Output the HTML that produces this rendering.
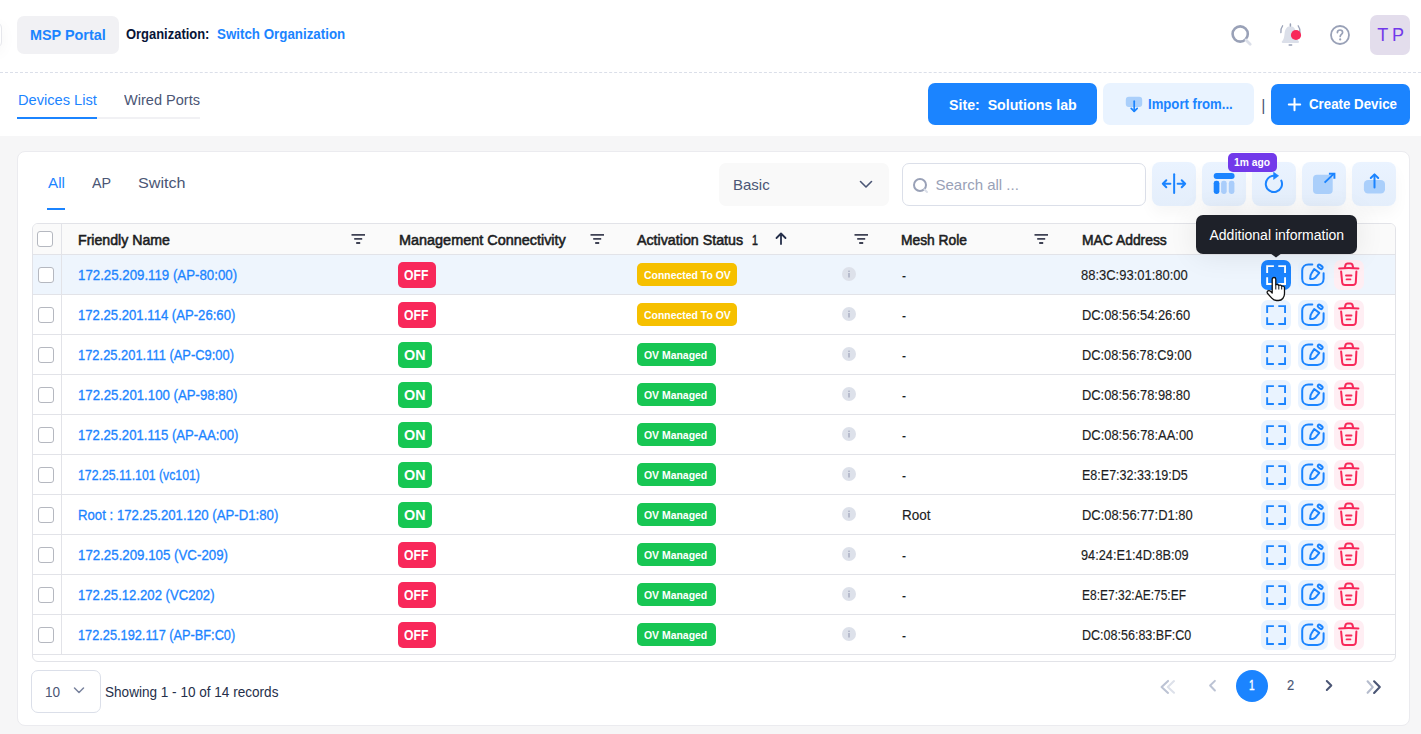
<!DOCTYPE html>
<html><head><meta charset="utf-8">
<style>
*{box-sizing:border-box;margin:0;padding:0}
html,body{width:1421px;height:734px;overflow:hidden;background:#fff;font-family:"Liberation Sans",sans-serif;position:relative}
.a{position:absolute;display:block}
.t{position:absolute;line-height:1;white-space:nowrap}
</style></head><body>
<div class="a" style="left:0px;top:136px;width:1421px;height:598px;background:#f6f6f7"></div>
<div class="a" style="left:-30px;top:22px;width:32px;height:26px;border:1px solid #e6e7ec;border-radius:6px;background:#fff;box-shadow:0 4px 16px rgba(0,0,0,.045)"></div>
<div class="a" style="left:17px;top:16px;width:102px;height:38px;background:#f1f1f4;border-radius:7px"></div>
<div class="t" style="left:30.00px;top:27.73px;font-size:14.5px;color:#1b84ff;font-weight:bold;transform:scaleX(0.9936);transform-origin:0 0;">MSP Portal</div>
<div class="t" style="left:126.00px;top:27.03px;font-size:14.5px;color:#071437;font-weight:bold;transform:scaleX(0.8926);transform-origin:0 0;">Organization:</div>
<div class="t" style="left:217.00px;top:27.03px;font-size:14.5px;color:#1b84ff;font-weight:bold;transform:scaleX(0.9198);transform-origin:0 0;">Switch Organization</div>
<div class="a" style="left:0px;top:72px;width:1421px;height:1px;border-top:1px dashed #dbdfe9"></div>
<svg class="a" style="left:1229px;top:23px" width="24" height="24" viewBox="0 0 24 24"><circle cx="11.2" cy="11" r="7.6" fill="none" stroke="#99a1b7" stroke-width="2.6"/><path d="M17 17 L21.2 21.2" stroke="#dbdfe9" stroke-width="2.8" stroke-linecap="round"/></svg>
<svg class="a" style="left:1278px;top:22px" width="26" height="26" viewBox="0 0 26 26"><path d="M12.4 4.3 C8.6 4.3 6.9 7.6 6.6 11.5 C6.3 15.2 5.6 17.6 4 19.3 C3.4 20 3.8 21 4.8 21 L20 21 C21 21 21.4 20 20.8 19.3 C19.2 17.6 18.5 15.2 18.2 11.5 C17.9 7.6 16.2 4.3 12.4 4.3 Z" fill="#dbdfe9"/><path d="M12.4 2 L12.4 4" stroke="#99a1b7" stroke-width="1.5" stroke-linecap="round"/><path d="M11.2 22.9 L13.6 22.9" stroke="#99a1b7" stroke-width="1.5" stroke-linecap="round"/><path d="M4.6 3.8 C3.2 5.6 2.6 8 2.9 10.6" fill="none" stroke="#99a1b7" stroke-width="1.3" stroke-linecap="round"/><path d="M20.2 3.8 C21.6 5.6 22.2 8 21.9 10.6" fill="none" stroke="#99a1b7" stroke-width="1.3" stroke-linecap="round"/><circle cx="18" cy="13" r="5.1" fill="#f8285a"/></svg>
<svg class="a" style="left:1328px;top:23px" width="24" height="24" viewBox="0 0 24 24"><circle cx="12" cy="12" r="9" fill="none" stroke="#99a1b7" stroke-width="1.8"/><path d="M9.4 9.6 C9.4 8 10.6 7 12 7 C13.5 7 14.6 8 14.6 9.4 C14.6 11.2 12.2 11.4 12.2 13.4" fill="none" stroke="#99a1b7" stroke-width="1.7" stroke-linecap="round"/><circle cx="12.2" cy="16.4" r="1.1" fill="#99a1b7"/></svg>
<div class="a" style="left:1370px;top:15px;width:40px;height:40px;background:#e3ddec;border-radius:7px"></div>
<div class="t" style="left:1377.30px;top:25.56px;font-size:18px;color:#7239ea;">T</div>
<div class="t" style="left:1392.00px;top:25.56px;font-size:18px;color:#7239ea;">P</div>
<div class="t" style="left:17.70px;top:92.85px;font-size:14px;color:#1b84ff;transform:scaleX(1.0454);transform-origin:0 0;">Devices List</div>
<div class="t" style="left:123.70px;top:92.85px;font-size:14px;color:#4b5675;transform:scaleX(1.0394);transform-origin:0 0;">Wired Ports</div>
<div class="a" style="left:17px;top:117px;width:183px;height:2px;background:#f1f1f4"></div>
<div class="a" style="left:17px;top:117px;width:80px;height:2px;background:#1b84ff"></div>
<div class="a" style="left:928px;top:83px;width:169px;height:42px;background:#1b84ff;border-radius:7px"></div>
<div class="t" style="left:948.60px;top:97.40px;font-size:15px;color:#fff;font-weight:bold;transform:scaleX(0.9458);transform-origin:0 0;">Site:&nbsp; Solutions lab</div>
<div class="a" style="left:1103px;top:83px;width:151px;height:42px;background:#e9f3ff;border-radius:7px"></div>
<svg class="a" style="left:1124px;top:95px" width="20" height="18" viewBox="0 0 20 18"><rect x="1.8" y="1.8" width="16.4" height="10.2" rx="3" fill="#aacffb"/><path d="M10.2 6.2 L10.2 16.2" stroke="#1b84ff" stroke-width="1.7" stroke-linecap="round"/><path d="M7.2 13.3 L10.2 16.4 L13.2 13.3" fill="none" stroke="#1b84ff" stroke-width="1.7" stroke-linecap="round" stroke-linejoin="round"/></svg>
<div class="t" style="left:1148.30px;top:96.85px;font-size:14px;color:#1b84ff;font-weight:bold;transform:scaleX(0.9389);transform-origin:0 0;">Import from...</div>
<div class="t" style="left:1261.20px;top:97.96px;font-size:16px;color:#4b5675;">|</div>
<div class="a" style="left:1271px;top:84px;width:139px;height:41px;background:#1b84ff;border-radius:7px"></div>
<svg class="a" style="left:1287px;top:97px" width="15" height="15" viewBox="0 0 15 15"><path d="M7.5 1.8 L7.5 13.2 M1.8 7.5 L13.2 7.5" stroke="#fff" stroke-width="2" stroke-linecap="round"/></svg>
<div class="t" style="left:1309.00px;top:96.85px;font-size:14px;color:#fff;font-weight:bold;transform:scaleX(0.9502);transform-origin:0 0;">Create Device</div>
<div class="a" style="left:17px;top:151px;width:1393px;height:575px;background:#fff;border:1px solid #ebebef;border-radius:8px"></div>
<div class="t" style="left:47.90px;top:175.40px;font-size:15px;color:#1b84ff;transform:scaleX(1.0141);transform-origin:0 0;">All</div>
<div class="t" style="left:91.80px;top:175.40px;font-size:15px;color:#4b5675;transform:scaleX(0.9545);transform-origin:0 0;">AP</div>
<div class="t" style="left:137.70px;top:175.40px;font-size:15px;color:#4b5675;transform:scaleX(1.0775);transform-origin:0 0;">Switch</div>
<div class="a" style="left:47px;top:208px;width:18px;height:2px;background:#1b84ff"></div>
<div class="a" style="left:719px;top:163px;width:170px;height:43px;background:#f9f9f9;border-radius:7px"></div>
<div class="t" style="left:733.00px;top:177.30px;font-size:15px;color:#4b5675;">Basic</div>
<svg class="a" style="left:858px;top:177px" width="16" height="14" viewBox="0 0 16 14"><path d="M2.5 4.5 L8 10 L13.5 4.5" fill="none" stroke="#4b5675" stroke-width="1.6" stroke-linecap="round" stroke-linejoin="round"/></svg>
<div class="a" style="left:902px;top:163px;width:244px;height:43px;border:1px solid #dbdfe9;border-radius:7px;background:#fff"></div>
<svg class="a" style="left:911px;top:176px" width="20" height="20" viewBox="0 0 20 20"><circle cx="9" cy="9" r="6" fill="none" stroke="#99a1b7" stroke-width="2"/><path d="M13.5 13.5 L16 16" stroke="#dbdfe9" stroke-width="2" stroke-linecap="round"/></svg>
<div class="t" style="left:935.50px;top:177.30px;font-size:15px;color:#99a1b7;">Search all ...</div>
<div class="a" style="left:1152px;top:162px;width:44px;height:44px;background:linear-gradient(#eaf3ff,#e4eefb);border-radius:8px;box-shadow:0 8px 16px rgba(0,0,0,.035)"></div>
<div class="a" style="left:1202px;top:162px;width:44px;height:44px;background:linear-gradient(#eaf3ff,#e4eefb);border-radius:8px;box-shadow:0 8px 16px rgba(0,0,0,.035)"></div>
<div class="a" style="left:1252px;top:162px;width:44px;height:44px;background:linear-gradient(#eaf3ff,#e4eefb);border-radius:8px;box-shadow:0 8px 16px rgba(0,0,0,.035)"></div>
<div class="a" style="left:1302px;top:162px;width:44px;height:44px;background:linear-gradient(#eaf3ff,#e4eefb);border-radius:8px;box-shadow:0 8px 16px rgba(0,0,0,.035)"></div>
<div class="a" style="left:1352px;top:162px;width:44px;height:44px;background:linear-gradient(#eaf3ff,#e4eefb);border-radius:8px;box-shadow:0 8px 16px rgba(0,0,0,.035)"></div>
<svg class="a" style="left:1152px;top:162px" width="44" height="44" viewBox="0 0 44 44"><path d="M22.15 12.3 L22.15 31.1" stroke="#1b84ff" stroke-width="2" stroke-linecap="round"/><path d="M10.8 21.8 L18.4 21.8 M14.3 18.3 L10.8 21.8 L14.3 25.3" fill="none" stroke="#1b84ff" stroke-width="2" stroke-linecap="round" stroke-linejoin="round"/><path d="M25.6 21.8 L33.2 21.8 M29.7 18.3 L33.2 21.8 L29.7 25.3" fill="none" stroke="#1b84ff" stroke-width="2" stroke-linecap="round" stroke-linejoin="round"/></svg>
<svg class="a" style="left:1202px;top:162px" width="44" height="44" viewBox="0 0 44 44"><rect x="11.7" y="11" width="20.9" height="5.9" rx="2.9" fill="#1b84ff"/><rect x="11.7" y="18.8" width="5.7" height="13.1" rx="2.4" fill="#1b84ff"/><rect x="19.1" y="18.8" width="5.6" height="13.1" rx="2.4" fill="#a9cdfb"/><rect x="26.8" y="18.8" width="5.6" height="13.1" rx="2.4" fill="#a9cdfb"/></svg>
<svg class="a" style="left:1252px;top:162px" width="44" height="44" viewBox="0 0 44 44"><path d="M21.9 13.8 A8.1 8.1 0 1 0 29.3 18.6" fill="none" stroke="#1b84ff" stroke-width="2" stroke-linecap="round"/><path d="M21.6 10.2 L26.6 13.8 L21.6 17.4 Z" fill="#1b84ff" stroke="#1b84ff" stroke-width="0.6" stroke-linejoin="round"/></svg>
<svg class="a" style="left:1302px;top:162px" width="44" height="44" viewBox="0 0 44 44"><rect x="11" y="12.8" width="19.7" height="19.3" rx="4" fill="#aacffb"/><path d="M22.6 20.6 L32 11.6" stroke="#1b84ff" stroke-width="2" stroke-linecap="butt"/><path d="M26.9 11.8 L32.4 11.8 L32.4 16.8" fill="none" stroke="#1b84ff" stroke-width="2" stroke-linecap="butt" stroke-linejoin="miter"/></svg>
<svg class="a" style="left:1352px;top:162px" width="44" height="44" viewBox="0 0 44 44"><rect x="11.9" y="17.9" width="21.1" height="13.7" rx="4.2" fill="#aacffb"/><path d="M22.5 13 L22.5 25.6" stroke="#1b84ff" stroke-width="2" stroke-linecap="round"/><path d="M18.8 16 L22.5 12.4 L26.2 16" fill="none" stroke="#1b84ff" stroke-width="2" stroke-linecap="round" stroke-linejoin="round"/></svg>
<div class="a" style="left:1228px;top:152.5px;width:49px;height:19px;background:#7239ea;border-radius:5px"></div>
<div class="t" style="left:1234.00px;top:156.77px;font-size:11.5px;color:#fff;font-weight:bold;transform:scaleX(0.8942);transform-origin:0 0;">1m ago</div>
<div class="a" style="left:32px;top:223px;width:1364px;height:439px;border:1px solid #e2e3e8;border-radius:6px;overflow:hidden;background:#fff"></div>
<div class="a" style="left:33px;top:224px;width:1362px;height:30px;background:#fafafa;border-top-left-radius:5px;border-top-right-radius:5px"></div>
<div class="a" style="left:33px;top:254px;width:1362px;height:1px;background:#e2e3e8"></div>
<div class="a" style="left:33px;top:255px;width:1362px;height:40px;background:#eef5fd"></div>
<div class="a" style="left:33px;top:294px;width:1362px;height:1px;background:#e2e3e8"></div>
<div class="a" style="left:38px;top:267px;width:16px;height:16px;border:1px solid #b5b8c0;border-radius:3px;background:#fff"></div>
<div class="t" style="left:78.30px;top:268.15px;font-size:14px;color:#1b84ff;transform:scaleX(0.9478);transform-origin:0 0;-webkit-text-stroke:0.3px #1b84ff;">172.25.209.119 (AP-80:00)</div>
<div class="a" style="left:398px;top:262px;width:38px;height:26px;background:#f8285a;border-radius:5px"></div>
<div class="t" style="left:404.40px;top:268.15px;font-size:14px;color:#fff;font-weight:bold;transform:scaleX(0.8714);transform-origin:0 0;">OFF</div>
<div class="a" style="left:637px;top:263px;width:100px;height:23px;background:#f6c000;border-radius:5px"></div>
<div class="t" style="left:643.50px;top:270.19px;font-size:11px;color:#fff;font-weight:bold;transform:scaleX(0.9490);transform-origin:0 0;">Connected To OV</div>
<svg class="a" style="left:842px;top:267px" width="14" height="14" viewBox="0 0 14 14"><circle cx="7" cy="7" r="7" fill="#dde1ea"/><rect x="6.3" y="6" width="1.4" height="4.5" fill="#a5acbf"/><rect x="6.3" y="3.6" width="1.4" height="1.4" fill="#a5acbf"/></svg>
<div class="t" style="left:901.50px;top:269.15px;font-size:14px;color:#1c1d22;transform:scaleX(0.8580);transform-origin:0 0;-webkit-text-stroke:0.15px #1c1d22;">-</div>
<div class="t" style="left:1081.10px;top:268.15px;font-size:14px;color:#1c1d22;transform:scaleX(0.9262);transform-origin:0 0;-webkit-text-stroke:0.15px #1c1d22;">88:3C:93:01:80:00</div>
<div class="a" style="left:1261px;top:260px;width:30px;height:30px;background:#1b84ff;border-radius:7px"></div>
<svg class="a" style="left:1261px;top:260px" width="30" height="30" viewBox="0 0 30 30"><path d="M6.15 12.9 L6.15 6.15 L12.9 6.15 M17.3 6.15 L24.05 6.15 L24.05 12.9 M24.05 17.3 L24.05 24.05 L17.3 24.05 M12.9 24.05 L6.15 24.05 L6.15 17.3" fill="none" stroke="#fff" stroke-width="1.9"/></svg>
<div class="a" style="left:1298px;top:260px;width:30px;height:30px;background:#e9f3ff;border-radius:7px"></div>
<svg class="a" style="left:1298px;top:260px" width="30" height="30" viewBox="0 0 30 30"><path d="M14.3 4.4 L10.4 4.4 C6.8 4.4 4.2 7 4.2 10.6 L4.2 18.7 C4.2 22.3 6.8 24.9 10.4 24.9 L19.4 24.9 C23 24.9 25.6 22.3 25.6 18.7 L25.6 13.3" fill="none" stroke="#1b84ff" stroke-width="2" stroke-linecap="round"/><path d="M16.2 9 L21.3 12.9 L17.6 17.4 C17 18.1 16.2 18.5 15.3 18.7 L13 19.1 C12.5 19.2 12.1 18.8 12.2 18.3 L12.5 15.8 C12.6 15 12.9 14.2 13.4 13.5 Z" fill="none" stroke="#1b84ff" stroke-width="2" stroke-linejoin="round"/><rect x="-2.7" y="-1.45" width="5.4" height="2.9" rx="1.45" transform="translate(22.2 6.8) rotate(37)" fill="none" stroke="#1b84ff" stroke-width="2"/></svg>
<div class="a" style="left:1334px;top:260px;width:30px;height:30px;background:#ffeef3;border-radius:7px"></div>
<svg class="a" style="left:1334px;top:260px" width="30" height="30" viewBox="0 0 30 30"><path d="M5.2 8.4 C11 7.9 18.6 7.9 24.4 8.4" fill="none" stroke="#f8285a" stroke-width="2" stroke-linecap="round"/><path d="M10.8 8 L11.3 5.7 C11.6 4.4 12.4 3.6 13.6 3.6 L16.4 3.6 C17.6 3.6 18.4 4.4 18.7 5.7 L19.2 8" fill="none" stroke="#f8285a" stroke-width="2"/><path d="M7.1 11.4 L8.2 22.5 C8.4 24.2 9.5 25.1 11.1 25.1 L18.9 25.1 C20.5 25.1 21.6 24.2 21.8 22.5 L22.4 11.4" fill="none" stroke="#f8285a" stroke-width="2" stroke-linecap="round"/><path d="M12 15.5 L17.5 15.5 M12.6 19.4 L16.4 19.4" stroke="#f8285a" stroke-width="1.9" stroke-linecap="round"/></svg>
<div class="a" style="left:33px;top:334px;width:1362px;height:1px;background:#e2e3e8"></div>
<div class="a" style="left:38px;top:307px;width:16px;height:16px;border:1px solid #b5b8c0;border-radius:3px;background:#fff"></div>
<div class="t" style="left:78.30px;top:308.15px;font-size:14px;color:#1b84ff;transform:scaleX(0.9371);transform-origin:0 0;-webkit-text-stroke:0.3px #1b84ff;">172.25.201.114 (AP-26:60)</div>
<div class="a" style="left:398px;top:302px;width:38px;height:26px;background:#f8285a;border-radius:5px"></div>
<div class="t" style="left:404.40px;top:308.15px;font-size:14px;color:#fff;font-weight:bold;transform:scaleX(0.8714);transform-origin:0 0;">OFF</div>
<div class="a" style="left:637px;top:303px;width:100px;height:23px;background:#f6c000;border-radius:5px"></div>
<div class="t" style="left:643.50px;top:310.19px;font-size:11px;color:#fff;font-weight:bold;transform:scaleX(0.9490);transform-origin:0 0;">Connected To OV</div>
<svg class="a" style="left:842px;top:307px" width="14" height="14" viewBox="0 0 14 14"><circle cx="7" cy="7" r="7" fill="#dde1ea"/><rect x="6.3" y="6" width="1.4" height="4.5" fill="#a5acbf"/><rect x="6.3" y="3.6" width="1.4" height="1.4" fill="#a5acbf"/></svg>
<div class="t" style="left:901.50px;top:309.15px;font-size:14px;color:#1c1d22;transform:scaleX(0.8580);transform-origin:0 0;-webkit-text-stroke:0.15px #1c1d22;">-</div>
<div class="t" style="left:1081.60px;top:308.15px;font-size:14px;color:#1c1d22;transform:scaleX(0.9206);transform-origin:0 0;-webkit-text-stroke:0.15px #1c1d22;">DC:08:56:54:26:60</div>
<div class="a" style="left:1261px;top:300px;width:30px;height:30px;background:#e9f3ff;border-radius:7px"></div>
<svg class="a" style="left:1261px;top:300px" width="30" height="30" viewBox="0 0 30 30"><path d="M6.15 12.9 L6.15 6.15 L12.9 6.15 M17.3 6.15 L24.05 6.15 L24.05 12.9 M24.05 17.3 L24.05 24.05 L17.3 24.05 M12.9 24.05 L6.15 24.05 L6.15 17.3" fill="none" stroke="#1b84ff" stroke-width="1.9"/></svg>
<div class="a" style="left:1298px;top:300px;width:30px;height:30px;background:#e9f3ff;border-radius:7px"></div>
<svg class="a" style="left:1298px;top:300px" width="30" height="30" viewBox="0 0 30 30"><path d="M14.3 4.4 L10.4 4.4 C6.8 4.4 4.2 7 4.2 10.6 L4.2 18.7 C4.2 22.3 6.8 24.9 10.4 24.9 L19.4 24.9 C23 24.9 25.6 22.3 25.6 18.7 L25.6 13.3" fill="none" stroke="#1b84ff" stroke-width="2" stroke-linecap="round"/><path d="M16.2 9 L21.3 12.9 L17.6 17.4 C17 18.1 16.2 18.5 15.3 18.7 L13 19.1 C12.5 19.2 12.1 18.8 12.2 18.3 L12.5 15.8 C12.6 15 12.9 14.2 13.4 13.5 Z" fill="none" stroke="#1b84ff" stroke-width="2" stroke-linejoin="round"/><rect x="-2.7" y="-1.45" width="5.4" height="2.9" rx="1.45" transform="translate(22.2 6.8) rotate(37)" fill="none" stroke="#1b84ff" stroke-width="2"/></svg>
<div class="a" style="left:1334px;top:300px;width:30px;height:30px;background:#ffeef3;border-radius:7px"></div>
<svg class="a" style="left:1334px;top:300px" width="30" height="30" viewBox="0 0 30 30"><path d="M5.2 8.4 C11 7.9 18.6 7.9 24.4 8.4" fill="none" stroke="#f8285a" stroke-width="2" stroke-linecap="round"/><path d="M10.8 8 L11.3 5.7 C11.6 4.4 12.4 3.6 13.6 3.6 L16.4 3.6 C17.6 3.6 18.4 4.4 18.7 5.7 L19.2 8" fill="none" stroke="#f8285a" stroke-width="2"/><path d="M7.1 11.4 L8.2 22.5 C8.4 24.2 9.5 25.1 11.1 25.1 L18.9 25.1 C20.5 25.1 21.6 24.2 21.8 22.5 L22.4 11.4" fill="none" stroke="#f8285a" stroke-width="2" stroke-linecap="round"/><path d="M12 15.5 L17.5 15.5 M12.6 19.4 L16.4 19.4" stroke="#f8285a" stroke-width="1.9" stroke-linecap="round"/></svg>
<div class="a" style="left:33px;top:374px;width:1362px;height:1px;background:#e2e3e8"></div>
<div class="a" style="left:38px;top:347px;width:16px;height:16px;border:1px solid #b5b8c0;border-radius:3px;background:#fff"></div>
<div class="t" style="left:78.30px;top:348.15px;font-size:14px;color:#1b84ff;transform:scaleX(0.9223);transform-origin:0 0;-webkit-text-stroke:0.3px #1b84ff;">172.25.201.111 (AP-C9:00)</div>
<div class="a" style="left:398px;top:342px;width:34px;height:26px;background:#17c653;border-radius:5px"></div>
<div class="t" style="left:404.40px;top:348.15px;font-size:14px;color:#fff;font-weight:bold;transform:scaleX(1.0238);transform-origin:0 0;">ON</div>
<div class="a" style="left:637px;top:343px;width:79px;height:23px;background:#17c653;border-radius:5px"></div>
<div class="t" style="left:643.50px;top:350.19px;font-size:11px;color:#fff;font-weight:bold;transform:scaleX(0.9490);transform-origin:0 0;">OV Managed</div>
<svg class="a" style="left:842px;top:347px" width="14" height="14" viewBox="0 0 14 14"><circle cx="7" cy="7" r="7" fill="#dde1ea"/><rect x="6.3" y="6" width="1.4" height="4.5" fill="#a5acbf"/><rect x="6.3" y="3.6" width="1.4" height="1.4" fill="#a5acbf"/></svg>
<div class="t" style="left:901.50px;top:349.15px;font-size:14px;color:#1c1d22;transform:scaleX(0.8580);transform-origin:0 0;-webkit-text-stroke:0.15px #1c1d22;">-</div>
<div class="t" style="left:1081.60px;top:348.15px;font-size:14px;color:#1c1d22;transform:scaleX(0.9136);transform-origin:0 0;-webkit-text-stroke:0.15px #1c1d22;">DC:08:56:78:C9:00</div>
<div class="a" style="left:1261px;top:340px;width:30px;height:30px;background:#e9f3ff;border-radius:7px"></div>
<svg class="a" style="left:1261px;top:340px" width="30" height="30" viewBox="0 0 30 30"><path d="M6.15 12.9 L6.15 6.15 L12.9 6.15 M17.3 6.15 L24.05 6.15 L24.05 12.9 M24.05 17.3 L24.05 24.05 L17.3 24.05 M12.9 24.05 L6.15 24.05 L6.15 17.3" fill="none" stroke="#1b84ff" stroke-width="1.9"/></svg>
<div class="a" style="left:1298px;top:340px;width:30px;height:30px;background:#e9f3ff;border-radius:7px"></div>
<svg class="a" style="left:1298px;top:340px" width="30" height="30" viewBox="0 0 30 30"><path d="M14.3 4.4 L10.4 4.4 C6.8 4.4 4.2 7 4.2 10.6 L4.2 18.7 C4.2 22.3 6.8 24.9 10.4 24.9 L19.4 24.9 C23 24.9 25.6 22.3 25.6 18.7 L25.6 13.3" fill="none" stroke="#1b84ff" stroke-width="2" stroke-linecap="round"/><path d="M16.2 9 L21.3 12.9 L17.6 17.4 C17 18.1 16.2 18.5 15.3 18.7 L13 19.1 C12.5 19.2 12.1 18.8 12.2 18.3 L12.5 15.8 C12.6 15 12.9 14.2 13.4 13.5 Z" fill="none" stroke="#1b84ff" stroke-width="2" stroke-linejoin="round"/><rect x="-2.7" y="-1.45" width="5.4" height="2.9" rx="1.45" transform="translate(22.2 6.8) rotate(37)" fill="none" stroke="#1b84ff" stroke-width="2"/></svg>
<div class="a" style="left:1334px;top:340px;width:30px;height:30px;background:#ffeef3;border-radius:7px"></div>
<svg class="a" style="left:1334px;top:340px" width="30" height="30" viewBox="0 0 30 30"><path d="M5.2 8.4 C11 7.9 18.6 7.9 24.4 8.4" fill="none" stroke="#f8285a" stroke-width="2" stroke-linecap="round"/><path d="M10.8 8 L11.3 5.7 C11.6 4.4 12.4 3.6 13.6 3.6 L16.4 3.6 C17.6 3.6 18.4 4.4 18.7 5.7 L19.2 8" fill="none" stroke="#f8285a" stroke-width="2"/><path d="M7.1 11.4 L8.2 22.5 C8.4 24.2 9.5 25.1 11.1 25.1 L18.9 25.1 C20.5 25.1 21.6 24.2 21.8 22.5 L22.4 11.4" fill="none" stroke="#f8285a" stroke-width="2" stroke-linecap="round"/><path d="M12 15.5 L17.5 15.5 M12.6 19.4 L16.4 19.4" stroke="#f8285a" stroke-width="1.9" stroke-linecap="round"/></svg>
<div class="a" style="left:33px;top:414px;width:1362px;height:1px;background:#e2e3e8"></div>
<div class="a" style="left:38px;top:387px;width:16px;height:16px;border:1px solid #b5b8c0;border-radius:3px;background:#fff"></div>
<div class="t" style="left:78.30px;top:388.15px;font-size:14px;color:#1b84ff;transform:scaleX(0.9437);transform-origin:0 0;-webkit-text-stroke:0.3px #1b84ff;">172.25.201.100 (AP-98:80)</div>
<div class="a" style="left:398px;top:382px;width:34px;height:26px;background:#17c653;border-radius:5px"></div>
<div class="t" style="left:404.40px;top:388.15px;font-size:14px;color:#fff;font-weight:bold;transform:scaleX(1.0238);transform-origin:0 0;">ON</div>
<div class="a" style="left:637px;top:383px;width:79px;height:23px;background:#17c653;border-radius:5px"></div>
<div class="t" style="left:643.50px;top:390.19px;font-size:11px;color:#fff;font-weight:bold;transform:scaleX(0.9490);transform-origin:0 0;">OV Managed</div>
<svg class="a" style="left:842px;top:387px" width="14" height="14" viewBox="0 0 14 14"><circle cx="7" cy="7" r="7" fill="#dde1ea"/><rect x="6.3" y="6" width="1.4" height="4.5" fill="#a5acbf"/><rect x="6.3" y="3.6" width="1.4" height="1.4" fill="#a5acbf"/></svg>
<div class="t" style="left:901.50px;top:389.15px;font-size:14px;color:#1c1d22;transform:scaleX(0.8580);transform-origin:0 0;-webkit-text-stroke:0.15px #1c1d22;">-</div>
<div class="t" style="left:1081.60px;top:388.15px;font-size:14px;color:#1c1d22;transform:scaleX(0.9206);transform-origin:0 0;-webkit-text-stroke:0.15px #1c1d22;">DC:08:56:78:98:80</div>
<div class="a" style="left:1261px;top:380px;width:30px;height:30px;background:#e9f3ff;border-radius:7px"></div>
<svg class="a" style="left:1261px;top:380px" width="30" height="30" viewBox="0 0 30 30"><path d="M6.15 12.9 L6.15 6.15 L12.9 6.15 M17.3 6.15 L24.05 6.15 L24.05 12.9 M24.05 17.3 L24.05 24.05 L17.3 24.05 M12.9 24.05 L6.15 24.05 L6.15 17.3" fill="none" stroke="#1b84ff" stroke-width="1.9"/></svg>
<div class="a" style="left:1298px;top:380px;width:30px;height:30px;background:#e9f3ff;border-radius:7px"></div>
<svg class="a" style="left:1298px;top:380px" width="30" height="30" viewBox="0 0 30 30"><path d="M14.3 4.4 L10.4 4.4 C6.8 4.4 4.2 7 4.2 10.6 L4.2 18.7 C4.2 22.3 6.8 24.9 10.4 24.9 L19.4 24.9 C23 24.9 25.6 22.3 25.6 18.7 L25.6 13.3" fill="none" stroke="#1b84ff" stroke-width="2" stroke-linecap="round"/><path d="M16.2 9 L21.3 12.9 L17.6 17.4 C17 18.1 16.2 18.5 15.3 18.7 L13 19.1 C12.5 19.2 12.1 18.8 12.2 18.3 L12.5 15.8 C12.6 15 12.9 14.2 13.4 13.5 Z" fill="none" stroke="#1b84ff" stroke-width="2" stroke-linejoin="round"/><rect x="-2.7" y="-1.45" width="5.4" height="2.9" rx="1.45" transform="translate(22.2 6.8) rotate(37)" fill="none" stroke="#1b84ff" stroke-width="2"/></svg>
<div class="a" style="left:1334px;top:380px;width:30px;height:30px;background:#ffeef3;border-radius:7px"></div>
<svg class="a" style="left:1334px;top:380px" width="30" height="30" viewBox="0 0 30 30"><path d="M5.2 8.4 C11 7.9 18.6 7.9 24.4 8.4" fill="none" stroke="#f8285a" stroke-width="2" stroke-linecap="round"/><path d="M10.8 8 L11.3 5.7 C11.6 4.4 12.4 3.6 13.6 3.6 L16.4 3.6 C17.6 3.6 18.4 4.4 18.7 5.7 L19.2 8" fill="none" stroke="#f8285a" stroke-width="2"/><path d="M7.1 11.4 L8.2 22.5 C8.4 24.2 9.5 25.1 11.1 25.1 L18.9 25.1 C20.5 25.1 21.6 24.2 21.8 22.5 L22.4 11.4" fill="none" stroke="#f8285a" stroke-width="2" stroke-linecap="round"/><path d="M12 15.5 L17.5 15.5 M12.6 19.4 L16.4 19.4" stroke="#f8285a" stroke-width="1.9" stroke-linecap="round"/></svg>
<div class="a" style="left:33px;top:454px;width:1362px;height:1px;background:#e2e3e8"></div>
<div class="a" style="left:38px;top:427px;width:16px;height:16px;border:1px solid #b5b8c0;border-radius:3px;background:#fff"></div>
<div class="t" style="left:78.30px;top:428.15px;font-size:14px;color:#1b84ff;transform:scaleX(0.9382);transform-origin:0 0;-webkit-text-stroke:0.3px #1b84ff;">172.25.201.115 (AP-AA:00)</div>
<div class="a" style="left:398px;top:422px;width:34px;height:26px;background:#17c653;border-radius:5px"></div>
<div class="t" style="left:404.40px;top:428.15px;font-size:14px;color:#fff;font-weight:bold;transform:scaleX(1.0238);transform-origin:0 0;">ON</div>
<div class="a" style="left:637px;top:423px;width:79px;height:23px;background:#17c653;border-radius:5px"></div>
<div class="t" style="left:643.50px;top:430.19px;font-size:11px;color:#fff;font-weight:bold;transform:scaleX(0.9490);transform-origin:0 0;">OV Managed</div>
<svg class="a" style="left:842px;top:427px" width="14" height="14" viewBox="0 0 14 14"><circle cx="7" cy="7" r="7" fill="#dde1ea"/><rect x="6.3" y="6" width="1.4" height="4.5" fill="#a5acbf"/><rect x="6.3" y="3.6" width="1.4" height="1.4" fill="#a5acbf"/></svg>
<div class="t" style="left:901.50px;top:429.15px;font-size:14px;color:#1c1d22;transform:scaleX(0.8580);transform-origin:0 0;-webkit-text-stroke:0.15px #1c1d22;">-</div>
<div class="t" style="left:1081.60px;top:428.15px;font-size:14px;color:#1c1d22;transform:scaleX(0.9226);transform-origin:0 0;-webkit-text-stroke:0.15px #1c1d22;">DC:08:56:78:AA:00</div>
<div class="a" style="left:1261px;top:420px;width:30px;height:30px;background:#e9f3ff;border-radius:7px"></div>
<svg class="a" style="left:1261px;top:420px" width="30" height="30" viewBox="0 0 30 30"><path d="M6.15 12.9 L6.15 6.15 L12.9 6.15 M17.3 6.15 L24.05 6.15 L24.05 12.9 M24.05 17.3 L24.05 24.05 L17.3 24.05 M12.9 24.05 L6.15 24.05 L6.15 17.3" fill="none" stroke="#1b84ff" stroke-width="1.9"/></svg>
<div class="a" style="left:1298px;top:420px;width:30px;height:30px;background:#e9f3ff;border-radius:7px"></div>
<svg class="a" style="left:1298px;top:420px" width="30" height="30" viewBox="0 0 30 30"><path d="M14.3 4.4 L10.4 4.4 C6.8 4.4 4.2 7 4.2 10.6 L4.2 18.7 C4.2 22.3 6.8 24.9 10.4 24.9 L19.4 24.9 C23 24.9 25.6 22.3 25.6 18.7 L25.6 13.3" fill="none" stroke="#1b84ff" stroke-width="2" stroke-linecap="round"/><path d="M16.2 9 L21.3 12.9 L17.6 17.4 C17 18.1 16.2 18.5 15.3 18.7 L13 19.1 C12.5 19.2 12.1 18.8 12.2 18.3 L12.5 15.8 C12.6 15 12.9 14.2 13.4 13.5 Z" fill="none" stroke="#1b84ff" stroke-width="2" stroke-linejoin="round"/><rect x="-2.7" y="-1.45" width="5.4" height="2.9" rx="1.45" transform="translate(22.2 6.8) rotate(37)" fill="none" stroke="#1b84ff" stroke-width="2"/></svg>
<div class="a" style="left:1334px;top:420px;width:30px;height:30px;background:#ffeef3;border-radius:7px"></div>
<svg class="a" style="left:1334px;top:420px" width="30" height="30" viewBox="0 0 30 30"><path d="M5.2 8.4 C11 7.9 18.6 7.9 24.4 8.4" fill="none" stroke="#f8285a" stroke-width="2" stroke-linecap="round"/><path d="M10.8 8 L11.3 5.7 C11.6 4.4 12.4 3.6 13.6 3.6 L16.4 3.6 C17.6 3.6 18.4 4.4 18.7 5.7 L19.2 8" fill="none" stroke="#f8285a" stroke-width="2"/><path d="M7.1 11.4 L8.2 22.5 C8.4 24.2 9.5 25.1 11.1 25.1 L18.9 25.1 C20.5 25.1 21.6 24.2 21.8 22.5 L22.4 11.4" fill="none" stroke="#f8285a" stroke-width="2" stroke-linecap="round"/><path d="M12 15.5 L17.5 15.5 M12.6 19.4 L16.4 19.4" stroke="#f8285a" stroke-width="1.9" stroke-linecap="round"/></svg>
<div class="a" style="left:33px;top:494px;width:1362px;height:1px;background:#e2e3e8"></div>
<div class="a" style="left:38px;top:467px;width:16px;height:16px;border:1px solid #b5b8c0;border-radius:3px;background:#fff"></div>
<div class="t" style="left:78.30px;top:468.15px;font-size:14px;color:#1b84ff;transform:scaleX(0.8766);transform-origin:0 0;-webkit-text-stroke:0.3px #1b84ff;">172.25.11.101 (vc101)</div>
<div class="a" style="left:398px;top:462px;width:34px;height:26px;background:#17c653;border-radius:5px"></div>
<div class="t" style="left:404.40px;top:468.15px;font-size:14px;color:#fff;font-weight:bold;transform:scaleX(1.0238);transform-origin:0 0;">ON</div>
<div class="a" style="left:637px;top:463px;width:79px;height:23px;background:#17c653;border-radius:5px"></div>
<div class="t" style="left:643.50px;top:470.19px;font-size:11px;color:#fff;font-weight:bold;transform:scaleX(0.9490);transform-origin:0 0;">OV Managed</div>
<svg class="a" style="left:842px;top:467px" width="14" height="14" viewBox="0 0 14 14"><circle cx="7" cy="7" r="7" fill="#dde1ea"/><rect x="6.3" y="6" width="1.4" height="4.5" fill="#a5acbf"/><rect x="6.3" y="3.6" width="1.4" height="1.4" fill="#a5acbf"/></svg>
<div class="t" style="left:901.50px;top:469.15px;font-size:14px;color:#1c1d22;transform:scaleX(0.8580);transform-origin:0 0;-webkit-text-stroke:0.15px #1c1d22;">-</div>
<div class="t" style="left:1081.60px;top:468.15px;font-size:14px;color:#1c1d22;transform:scaleX(0.8942);transform-origin:0 0;-webkit-text-stroke:0.15px #1c1d22;">E8:E7:32:33:19:D5</div>
<div class="a" style="left:1261px;top:460px;width:30px;height:30px;background:#e9f3ff;border-radius:7px"></div>
<svg class="a" style="left:1261px;top:460px" width="30" height="30" viewBox="0 0 30 30"><path d="M6.15 12.9 L6.15 6.15 L12.9 6.15 M17.3 6.15 L24.05 6.15 L24.05 12.9 M24.05 17.3 L24.05 24.05 L17.3 24.05 M12.9 24.05 L6.15 24.05 L6.15 17.3" fill="none" stroke="#1b84ff" stroke-width="1.9"/></svg>
<div class="a" style="left:1298px;top:460px;width:30px;height:30px;background:#e9f3ff;border-radius:7px"></div>
<svg class="a" style="left:1298px;top:460px" width="30" height="30" viewBox="0 0 30 30"><path d="M14.3 4.4 L10.4 4.4 C6.8 4.4 4.2 7 4.2 10.6 L4.2 18.7 C4.2 22.3 6.8 24.9 10.4 24.9 L19.4 24.9 C23 24.9 25.6 22.3 25.6 18.7 L25.6 13.3" fill="none" stroke="#1b84ff" stroke-width="2" stroke-linecap="round"/><path d="M16.2 9 L21.3 12.9 L17.6 17.4 C17 18.1 16.2 18.5 15.3 18.7 L13 19.1 C12.5 19.2 12.1 18.8 12.2 18.3 L12.5 15.8 C12.6 15 12.9 14.2 13.4 13.5 Z" fill="none" stroke="#1b84ff" stroke-width="2" stroke-linejoin="round"/><rect x="-2.7" y="-1.45" width="5.4" height="2.9" rx="1.45" transform="translate(22.2 6.8) rotate(37)" fill="none" stroke="#1b84ff" stroke-width="2"/></svg>
<div class="a" style="left:1334px;top:460px;width:30px;height:30px;background:#ffeef3;border-radius:7px"></div>
<svg class="a" style="left:1334px;top:460px" width="30" height="30" viewBox="0 0 30 30"><path d="M5.2 8.4 C11 7.9 18.6 7.9 24.4 8.4" fill="none" stroke="#f8285a" stroke-width="2" stroke-linecap="round"/><path d="M10.8 8 L11.3 5.7 C11.6 4.4 12.4 3.6 13.6 3.6 L16.4 3.6 C17.6 3.6 18.4 4.4 18.7 5.7 L19.2 8" fill="none" stroke="#f8285a" stroke-width="2"/><path d="M7.1 11.4 L8.2 22.5 C8.4 24.2 9.5 25.1 11.1 25.1 L18.9 25.1 C20.5 25.1 21.6 24.2 21.8 22.5 L22.4 11.4" fill="none" stroke="#f8285a" stroke-width="2" stroke-linecap="round"/><path d="M12 15.5 L17.5 15.5 M12.6 19.4 L16.4 19.4" stroke="#f8285a" stroke-width="1.9" stroke-linecap="round"/></svg>
<div class="a" style="left:33px;top:534px;width:1362px;height:1px;background:#e2e3e8"></div>
<div class="a" style="left:38px;top:507px;width:16px;height:16px;border:1px solid #b5b8c0;border-radius:3px;background:#fff"></div>
<div class="t" style="left:78.30px;top:508.15px;font-size:14px;color:#1b84ff;transform:scaleX(0.9427);transform-origin:0 0;-webkit-text-stroke:0.3px #1b84ff;">Root : 172.25.201.120 (AP-D1:80)</div>
<div class="a" style="left:398px;top:502px;width:34px;height:26px;background:#17c653;border-radius:5px"></div>
<div class="t" style="left:404.40px;top:508.15px;font-size:14px;color:#fff;font-weight:bold;transform:scaleX(1.0238);transform-origin:0 0;">ON</div>
<div class="a" style="left:637px;top:503px;width:79px;height:23px;background:#17c653;border-radius:5px"></div>
<div class="t" style="left:643.50px;top:510.19px;font-size:11px;color:#fff;font-weight:bold;transform:scaleX(0.9490);transform-origin:0 0;">OV Managed</div>
<svg class="a" style="left:842px;top:507px" width="14" height="14" viewBox="0 0 14 14"><circle cx="7" cy="7" r="7" fill="#dde1ea"/><rect x="6.3" y="6" width="1.4" height="4.5" fill="#a5acbf"/><rect x="6.3" y="3.6" width="1.4" height="1.4" fill="#a5acbf"/></svg>
<div class="t" style="left:901.50px;top:508.15px;font-size:14px;color:#1c1d22;transform:scaleX(0.9639);transform-origin:0 0;-webkit-text-stroke:0.15px #1c1d22;">Root</div>
<div class="t" style="left:1081.60px;top:508.15px;font-size:14px;color:#1c1d22;transform:scaleX(0.9228);transform-origin:0 0;-webkit-text-stroke:0.15px #1c1d22;">DC:08:56:77:D1:80</div>
<div class="a" style="left:1261px;top:500px;width:30px;height:30px;background:#e9f3ff;border-radius:7px"></div>
<svg class="a" style="left:1261px;top:500px" width="30" height="30" viewBox="0 0 30 30"><path d="M6.15 12.9 L6.15 6.15 L12.9 6.15 M17.3 6.15 L24.05 6.15 L24.05 12.9 M24.05 17.3 L24.05 24.05 L17.3 24.05 M12.9 24.05 L6.15 24.05 L6.15 17.3" fill="none" stroke="#1b84ff" stroke-width="1.9"/></svg>
<div class="a" style="left:1298px;top:500px;width:30px;height:30px;background:#e9f3ff;border-radius:7px"></div>
<svg class="a" style="left:1298px;top:500px" width="30" height="30" viewBox="0 0 30 30"><path d="M14.3 4.4 L10.4 4.4 C6.8 4.4 4.2 7 4.2 10.6 L4.2 18.7 C4.2 22.3 6.8 24.9 10.4 24.9 L19.4 24.9 C23 24.9 25.6 22.3 25.6 18.7 L25.6 13.3" fill="none" stroke="#1b84ff" stroke-width="2" stroke-linecap="round"/><path d="M16.2 9 L21.3 12.9 L17.6 17.4 C17 18.1 16.2 18.5 15.3 18.7 L13 19.1 C12.5 19.2 12.1 18.8 12.2 18.3 L12.5 15.8 C12.6 15 12.9 14.2 13.4 13.5 Z" fill="none" stroke="#1b84ff" stroke-width="2" stroke-linejoin="round"/><rect x="-2.7" y="-1.45" width="5.4" height="2.9" rx="1.45" transform="translate(22.2 6.8) rotate(37)" fill="none" stroke="#1b84ff" stroke-width="2"/></svg>
<div class="a" style="left:1334px;top:500px;width:30px;height:30px;background:#ffeef3;border-radius:7px"></div>
<svg class="a" style="left:1334px;top:500px" width="30" height="30" viewBox="0 0 30 30"><path d="M5.2 8.4 C11 7.9 18.6 7.9 24.4 8.4" fill="none" stroke="#f8285a" stroke-width="2" stroke-linecap="round"/><path d="M10.8 8 L11.3 5.7 C11.6 4.4 12.4 3.6 13.6 3.6 L16.4 3.6 C17.6 3.6 18.4 4.4 18.7 5.7 L19.2 8" fill="none" stroke="#f8285a" stroke-width="2"/><path d="M7.1 11.4 L8.2 22.5 C8.4 24.2 9.5 25.1 11.1 25.1 L18.9 25.1 C20.5 25.1 21.6 24.2 21.8 22.5 L22.4 11.4" fill="none" stroke="#f8285a" stroke-width="2" stroke-linecap="round"/><path d="M12 15.5 L17.5 15.5 M12.6 19.4 L16.4 19.4" stroke="#f8285a" stroke-width="1.9" stroke-linecap="round"/></svg>
<div class="a" style="left:33px;top:574px;width:1362px;height:1px;background:#e2e3e8"></div>
<div class="a" style="left:38px;top:547px;width:16px;height:16px;border:1px solid #b5b8c0;border-radius:3px;background:#fff"></div>
<div class="t" style="left:78.30px;top:548.15px;font-size:14px;color:#1b84ff;transform:scaleX(0.9493);transform-origin:0 0;-webkit-text-stroke:0.3px #1b84ff;">172.25.209.105 (VC-209)</div>
<div class="a" style="left:398px;top:542px;width:38px;height:26px;background:#f8285a;border-radius:5px"></div>
<div class="t" style="left:404.40px;top:548.15px;font-size:14px;color:#fff;font-weight:bold;transform:scaleX(0.8714);transform-origin:0 0;">OFF</div>
<div class="a" style="left:637px;top:543px;width:79px;height:23px;background:#17c653;border-radius:5px"></div>
<div class="t" style="left:643.50px;top:550.19px;font-size:11px;color:#fff;font-weight:bold;transform:scaleX(0.9490);transform-origin:0 0;">OV Managed</div>
<svg class="a" style="left:842px;top:547px" width="14" height="14" viewBox="0 0 14 14"><circle cx="7" cy="7" r="7" fill="#dde1ea"/><rect x="6.3" y="6" width="1.4" height="4.5" fill="#a5acbf"/><rect x="6.3" y="3.6" width="1.4" height="1.4" fill="#a5acbf"/></svg>
<div class="t" style="left:901.50px;top:549.15px;font-size:14px;color:#1c1d22;transform:scaleX(0.8580);transform-origin:0 0;-webkit-text-stroke:0.15px #1c1d22;">-</div>
<div class="t" style="left:1081.10px;top:548.15px;font-size:14px;color:#1c1d22;transform:scaleX(0.9103);transform-origin:0 0;-webkit-text-stroke:0.15px #1c1d22;">94:24:E1:4D:8B:09</div>
<div class="a" style="left:1261px;top:540px;width:30px;height:30px;background:#e9f3ff;border-radius:7px"></div>
<svg class="a" style="left:1261px;top:540px" width="30" height="30" viewBox="0 0 30 30"><path d="M6.15 12.9 L6.15 6.15 L12.9 6.15 M17.3 6.15 L24.05 6.15 L24.05 12.9 M24.05 17.3 L24.05 24.05 L17.3 24.05 M12.9 24.05 L6.15 24.05 L6.15 17.3" fill="none" stroke="#1b84ff" stroke-width="1.9"/></svg>
<div class="a" style="left:1298px;top:540px;width:30px;height:30px;background:#e9f3ff;border-radius:7px"></div>
<svg class="a" style="left:1298px;top:540px" width="30" height="30" viewBox="0 0 30 30"><path d="M14.3 4.4 L10.4 4.4 C6.8 4.4 4.2 7 4.2 10.6 L4.2 18.7 C4.2 22.3 6.8 24.9 10.4 24.9 L19.4 24.9 C23 24.9 25.6 22.3 25.6 18.7 L25.6 13.3" fill="none" stroke="#1b84ff" stroke-width="2" stroke-linecap="round"/><path d="M16.2 9 L21.3 12.9 L17.6 17.4 C17 18.1 16.2 18.5 15.3 18.7 L13 19.1 C12.5 19.2 12.1 18.8 12.2 18.3 L12.5 15.8 C12.6 15 12.9 14.2 13.4 13.5 Z" fill="none" stroke="#1b84ff" stroke-width="2" stroke-linejoin="round"/><rect x="-2.7" y="-1.45" width="5.4" height="2.9" rx="1.45" transform="translate(22.2 6.8) rotate(37)" fill="none" stroke="#1b84ff" stroke-width="2"/></svg>
<div class="a" style="left:1334px;top:540px;width:30px;height:30px;background:#ffeef3;border-radius:7px"></div>
<svg class="a" style="left:1334px;top:540px" width="30" height="30" viewBox="0 0 30 30"><path d="M5.2 8.4 C11 7.9 18.6 7.9 24.4 8.4" fill="none" stroke="#f8285a" stroke-width="2" stroke-linecap="round"/><path d="M10.8 8 L11.3 5.7 C11.6 4.4 12.4 3.6 13.6 3.6 L16.4 3.6 C17.6 3.6 18.4 4.4 18.7 5.7 L19.2 8" fill="none" stroke="#f8285a" stroke-width="2"/><path d="M7.1 11.4 L8.2 22.5 C8.4 24.2 9.5 25.1 11.1 25.1 L18.9 25.1 C20.5 25.1 21.6 24.2 21.8 22.5 L22.4 11.4" fill="none" stroke="#f8285a" stroke-width="2" stroke-linecap="round"/><path d="M12 15.5 L17.5 15.5 M12.6 19.4 L16.4 19.4" stroke="#f8285a" stroke-width="1.9" stroke-linecap="round"/></svg>
<div class="a" style="left:33px;top:614px;width:1362px;height:1px;background:#e2e3e8"></div>
<div class="a" style="left:38px;top:587px;width:16px;height:16px;border:1px solid #b5b8c0;border-radius:3px;background:#fff"></div>
<div class="t" style="left:78.30px;top:588.15px;font-size:14px;color:#1b84ff;transform:scaleX(0.9378);transform-origin:0 0;-webkit-text-stroke:0.3px #1b84ff;">172.25.12.202 (VC202)</div>
<div class="a" style="left:398px;top:582px;width:38px;height:26px;background:#f8285a;border-radius:5px"></div>
<div class="t" style="left:404.40px;top:588.15px;font-size:14px;color:#fff;font-weight:bold;transform:scaleX(0.8714);transform-origin:0 0;">OFF</div>
<div class="a" style="left:637px;top:583px;width:79px;height:23px;background:#17c653;border-radius:5px"></div>
<div class="t" style="left:643.50px;top:590.19px;font-size:11px;color:#fff;font-weight:bold;transform:scaleX(0.9490);transform-origin:0 0;">OV Managed</div>
<svg class="a" style="left:842px;top:587px" width="14" height="14" viewBox="0 0 14 14"><circle cx="7" cy="7" r="7" fill="#dde1ea"/><rect x="6.3" y="6" width="1.4" height="4.5" fill="#a5acbf"/><rect x="6.3" y="3.6" width="1.4" height="1.4" fill="#a5acbf"/></svg>
<div class="t" style="left:901.50px;top:589.15px;font-size:14px;color:#1c1d22;transform:scaleX(0.8580);transform-origin:0 0;-webkit-text-stroke:0.15px #1c1d22;">-</div>
<div class="t" style="left:1081.60px;top:588.15px;font-size:14px;color:#1c1d22;transform:scaleX(0.8566);transform-origin:0 0;-webkit-text-stroke:0.15px #1c1d22;">E8:E7:32:AE:75:EF</div>
<div class="a" style="left:1261px;top:580px;width:30px;height:30px;background:#e9f3ff;border-radius:7px"></div>
<svg class="a" style="left:1261px;top:580px" width="30" height="30" viewBox="0 0 30 30"><path d="M6.15 12.9 L6.15 6.15 L12.9 6.15 M17.3 6.15 L24.05 6.15 L24.05 12.9 M24.05 17.3 L24.05 24.05 L17.3 24.05 M12.9 24.05 L6.15 24.05 L6.15 17.3" fill="none" stroke="#1b84ff" stroke-width="1.9"/></svg>
<div class="a" style="left:1298px;top:580px;width:30px;height:30px;background:#e9f3ff;border-radius:7px"></div>
<svg class="a" style="left:1298px;top:580px" width="30" height="30" viewBox="0 0 30 30"><path d="M14.3 4.4 L10.4 4.4 C6.8 4.4 4.2 7 4.2 10.6 L4.2 18.7 C4.2 22.3 6.8 24.9 10.4 24.9 L19.4 24.9 C23 24.9 25.6 22.3 25.6 18.7 L25.6 13.3" fill="none" stroke="#1b84ff" stroke-width="2" stroke-linecap="round"/><path d="M16.2 9 L21.3 12.9 L17.6 17.4 C17 18.1 16.2 18.5 15.3 18.7 L13 19.1 C12.5 19.2 12.1 18.8 12.2 18.3 L12.5 15.8 C12.6 15 12.9 14.2 13.4 13.5 Z" fill="none" stroke="#1b84ff" stroke-width="2" stroke-linejoin="round"/><rect x="-2.7" y="-1.45" width="5.4" height="2.9" rx="1.45" transform="translate(22.2 6.8) rotate(37)" fill="none" stroke="#1b84ff" stroke-width="2"/></svg>
<div class="a" style="left:1334px;top:580px;width:30px;height:30px;background:#ffeef3;border-radius:7px"></div>
<svg class="a" style="left:1334px;top:580px" width="30" height="30" viewBox="0 0 30 30"><path d="M5.2 8.4 C11 7.9 18.6 7.9 24.4 8.4" fill="none" stroke="#f8285a" stroke-width="2" stroke-linecap="round"/><path d="M10.8 8 L11.3 5.7 C11.6 4.4 12.4 3.6 13.6 3.6 L16.4 3.6 C17.6 3.6 18.4 4.4 18.7 5.7 L19.2 8" fill="none" stroke="#f8285a" stroke-width="2"/><path d="M7.1 11.4 L8.2 22.5 C8.4 24.2 9.5 25.1 11.1 25.1 L18.9 25.1 C20.5 25.1 21.6 24.2 21.8 22.5 L22.4 11.4" fill="none" stroke="#f8285a" stroke-width="2" stroke-linecap="round"/><path d="M12 15.5 L17.5 15.5 M12.6 19.4 L16.4 19.4" stroke="#f8285a" stroke-width="1.9" stroke-linecap="round"/></svg>
<div class="a" style="left:33px;top:654px;width:1362px;height:1px;background:#e2e3e8"></div>
<div class="a" style="left:38px;top:627px;width:16px;height:16px;border:1px solid #b5b8c0;border-radius:3px;background:#fff"></div>
<div class="t" style="left:78.30px;top:628.15px;font-size:14px;color:#1b84ff;transform:scaleX(0.9113);transform-origin:0 0;-webkit-text-stroke:0.3px #1b84ff;">172.25.192.117 (AP-BF:C0)</div>
<div class="a" style="left:398px;top:622px;width:38px;height:26px;background:#f8285a;border-radius:5px"></div>
<div class="t" style="left:404.40px;top:628.15px;font-size:14px;color:#fff;font-weight:bold;transform:scaleX(0.8714);transform-origin:0 0;">OFF</div>
<div class="a" style="left:637px;top:623px;width:79px;height:23px;background:#17c653;border-radius:5px"></div>
<div class="t" style="left:643.50px;top:630.19px;font-size:11px;color:#fff;font-weight:bold;transform:scaleX(0.9490);transform-origin:0 0;">OV Managed</div>
<svg class="a" style="left:842px;top:627px" width="14" height="14" viewBox="0 0 14 14"><circle cx="7" cy="7" r="7" fill="#dde1ea"/><rect x="6.3" y="6" width="1.4" height="4.5" fill="#a5acbf"/><rect x="6.3" y="3.6" width="1.4" height="1.4" fill="#a5acbf"/></svg>
<div class="t" style="left:901.50px;top:629.15px;font-size:14px;color:#1c1d22;transform:scaleX(0.8580);transform-origin:0 0;-webkit-text-stroke:0.15px #1c1d22;">-</div>
<div class="t" style="left:1081.60px;top:628.15px;font-size:14px;color:#1c1d22;transform:scaleX(0.8946);transform-origin:0 0;-webkit-text-stroke:0.15px #1c1d22;">DC:08:56:83:BF:C0</div>
<div class="a" style="left:1261px;top:620px;width:30px;height:30px;background:#e9f3ff;border-radius:7px"></div>
<svg class="a" style="left:1261px;top:620px" width="30" height="30" viewBox="0 0 30 30"><path d="M6.15 12.9 L6.15 6.15 L12.9 6.15 M17.3 6.15 L24.05 6.15 L24.05 12.9 M24.05 17.3 L24.05 24.05 L17.3 24.05 M12.9 24.05 L6.15 24.05 L6.15 17.3" fill="none" stroke="#1b84ff" stroke-width="1.9"/></svg>
<div class="a" style="left:1298px;top:620px;width:30px;height:30px;background:#e9f3ff;border-radius:7px"></div>
<svg class="a" style="left:1298px;top:620px" width="30" height="30" viewBox="0 0 30 30"><path d="M14.3 4.4 L10.4 4.4 C6.8 4.4 4.2 7 4.2 10.6 L4.2 18.7 C4.2 22.3 6.8 24.9 10.4 24.9 L19.4 24.9 C23 24.9 25.6 22.3 25.6 18.7 L25.6 13.3" fill="none" stroke="#1b84ff" stroke-width="2" stroke-linecap="round"/><path d="M16.2 9 L21.3 12.9 L17.6 17.4 C17 18.1 16.2 18.5 15.3 18.7 L13 19.1 C12.5 19.2 12.1 18.8 12.2 18.3 L12.5 15.8 C12.6 15 12.9 14.2 13.4 13.5 Z" fill="none" stroke="#1b84ff" stroke-width="2" stroke-linejoin="round"/><rect x="-2.7" y="-1.45" width="5.4" height="2.9" rx="1.45" transform="translate(22.2 6.8) rotate(37)" fill="none" stroke="#1b84ff" stroke-width="2"/></svg>
<div class="a" style="left:1334px;top:620px;width:30px;height:30px;background:#ffeef3;border-radius:7px"></div>
<svg class="a" style="left:1334px;top:620px" width="30" height="30" viewBox="0 0 30 30"><path d="M5.2 8.4 C11 7.9 18.6 7.9 24.4 8.4" fill="none" stroke="#f8285a" stroke-width="2" stroke-linecap="round"/><path d="M10.8 8 L11.3 5.7 C11.6 4.4 12.4 3.6 13.6 3.6 L16.4 3.6 C17.6 3.6 18.4 4.4 18.7 5.7 L19.2 8" fill="none" stroke="#f8285a" stroke-width="2"/><path d="M7.1 11.4 L8.2 22.5 C8.4 24.2 9.5 25.1 11.1 25.1 L18.9 25.1 C20.5 25.1 21.6 24.2 21.8 22.5 L22.4 11.4" fill="none" stroke="#f8285a" stroke-width="2" stroke-linecap="round"/><path d="M12 15.5 L17.5 15.5 M12.6 19.4 L16.4 19.4" stroke="#f8285a" stroke-width="1.9" stroke-linecap="round"/></svg>
<div class="a" style="left:61px;top:224px;width:1px;height:431px;background:#e2e3e8"></div>
<div class="a" style="left:37px;top:231px;width:16px;height:16px;border:1px solid #b5b8c0;border-radius:3px;background:#fff"></div>
<div class="t" style="left:78.20px;top:233.15px;font-size:14px;color:#1c1d22;transform:scaleX(1.0096);transform-origin:0 0;-webkit-text-stroke:0.55px #1c1d22;">Friendly Name</div>
<div class="t" style="left:398.70px;top:233.15px;font-size:14px;color:#1c1d22;transform:scaleX(1.0305);transform-origin:0 0;-webkit-text-stroke:0.55px #1c1d22;">Management Connectivity</div>
<div class="t" style="left:637.40px;top:232.95px;font-size:14px;color:#1c1d22;transform:scaleX(1.0175);transform-origin:0 0;-webkit-text-stroke:0.55px #1c1d22;">Activation Status</div>
<div class="t" style="left:751.70px;top:232.95px;font-size:14px;color:#1c1d22;transform:scaleX(0.7580);transform-origin:0 0;-webkit-text-stroke:0.55px #1c1d22;">1</div>
<svg class="a" style="left:774px;top:231px" width="14" height="14" viewBox="0 0 14 14"><path d="M7 13 L7 2.5 M2.5 7 L7 2.5 L11.5 7" fill="none" stroke="#252f4a" stroke-width="1.8" stroke-linecap="round" stroke-linejoin="round"/></svg>
<div class="t" style="left:901.40px;top:233.15px;font-size:14px;color:#1c1d22;transform:scaleX(0.9863);transform-origin:0 0;-webkit-text-stroke:0.55px #1c1d22;">Mesh Role</div>
<div class="t" style="left:1081.50px;top:233.15px;font-size:14px;color:#1c1d22;transform:scaleX(0.9909);transform-origin:0 0;-webkit-text-stroke:0.55px #1c1d22;">MAC Address</div>
<svg class="a" style="left:351px;top:233px" width="15" height="12" viewBox="0 0 15 12"><path d="M0.5 1.9 L14 1.9 M3.2 5.9 L11.2 5.9 M5.2 10 L9.2 10" stroke="#3f4254" stroke-width="1.9"/></svg>
<svg class="a" style="left:590px;top:233px" width="15" height="12" viewBox="0 0 15 12"><path d="M0.5 1.9 L14 1.9 M3.2 5.9 L11.2 5.9 M5.2 10 L9.2 10" stroke="#3f4254" stroke-width="1.9"/></svg>
<svg class="a" style="left:854px;top:233px" width="15" height="12" viewBox="0 0 15 12"><path d="M0.5 1.9 L14 1.9 M3.2 5.9 L11.2 5.9 M5.2 10 L9.2 10" stroke="#3f4254" stroke-width="1.9"/></svg>
<svg class="a" style="left:1034px;top:233px" width="15" height="12" viewBox="0 0 15 12"><path d="M0.5 1.9 L14 1.9 M3.2 5.9 L11.2 5.9 M5.2 10 L9.2 10" stroke="#3f4254" stroke-width="1.9"/></svg>
<div class="a" style="left:31px;top:670px;width:70px;height:43px;border:1px solid #dbdfe9;border-radius:7px;background:#fff"></div>
<div class="t" style="left:45.30px;top:684.10px;font-size:15px;color:#4b5675;transform:scaleX(0.9053);transform-origin:0 0;">10</div>
<svg class="a" style="left:72px;top:684px" width="14" height="14" viewBox="0 0 14 14"><path d="M2.5 4 L7 8.5 L11.5 4" fill="none" stroke="#78829d" stroke-width="1.5" stroke-linecap="round" stroke-linejoin="round"/></svg>
<div class="t" style="left:104.70px;top:684.65px;font-size:14px;color:#252f4a;transform:scaleX(0.9688);transform-origin:0 0;">Showing 1 - 10 of 14 records</div>
<svg class="a" style="left:1155px;top:675px" width="24" height="24" viewBox="0 0 24 24"><path d="M13.05 5.9 L6.6 12 L13.05 17.9" fill="none" stroke="#bcc3d4" stroke-width="2.1" stroke-linecap="round" stroke-linejoin="round"/><path d="M19 6.1 L12.8 12 L19 17.7" fill="none" stroke="#dde1ea" stroke-width="2.1" stroke-linecap="round" stroke-linejoin="round"/></svg>
<svg class="a" style="left:1205px;top:675px" width="16" height="20" viewBox="0 0 16 20"><path d="M9.9 5.9 L5.1 10.5 L9.9 15.5" fill="none" stroke="#bcc3d4" stroke-width="2" stroke-linecap="round" stroke-linejoin="round"/></svg>
<div class="a" style="left:1236px;top:670px;width:32px;height:32px;background:#1b84ff;border-radius:50%"></div>
<div class="t" style="left:1249.00px;top:677.85px;font-size:14px;color:#fff;transform:scaleX(0.7194);transform-origin:0 0;-webkit-text-stroke:0.4px #fff;">1</div>
<div class="t" style="left:1287.20px;top:677.63px;font-size:14.5px;color:#4b5675;transform:scaleX(0.8931);transform-origin:0 0;-webkit-text-stroke:0.2px #4b5675;">2</div>
<svg class="a" style="left:1320px;top:675px" width="16" height="20" viewBox="0 0 16 20"><path d="M6.8 6 L11.3 10.5 L6.8 15" fill="none" stroke="#4b5675" stroke-width="2" stroke-linecap="round" stroke-linejoin="round"/></svg>
<svg class="a" style="left:1360px;top:675px" width="24" height="24" viewBox="0 0 24 24"><path d="M7.6 6.3 L12.8 12.1 L7.6 17.8" fill="none" stroke="#b5bccd" stroke-width="2.1" stroke-linecap="round" stroke-linejoin="round"/><path d="M14.1 6.3 L19.8 12.1 L14.1 18" fill="none" stroke="#4b5675" stroke-width="2.1" stroke-linecap="round" stroke-linejoin="round"/></svg>
<div class="a" style="left:1196px;top:215px;width:161px;height:39px;background:#1e2129;border-radius:7px;box-shadow:0 0 30px rgba(0,0,0,.09)"></div>
<svg class="a" style="left:1270px;top:253px" width="12" height="6" viewBox="0 0 12 6"><path d="M0 0 L12 0 L6 4.6 Z" fill="#1e2129"/></svg>
<div class="t" style="left:1209.50px;top:227.65px;font-size:14px;color:#fff;">Additional information</div>
<svg class="a" style="left:1264px;top:275px" width="24" height="28" viewBox="0 0 24 28"><path d="M8.2 4.3 C8.2 3.2 9 2.5 10 2.5 C11 2.5 11.8 3.2 11.8 4.3 L11.8 9.8 C12.8 9.2 14.3 9.4 14.8 10.4 C15.8 9.8 17.3 10.2 17.7 11.2 C18.7 10.8 20.5 11.2 20.5 12.8 L20.5 18.5 C20.5 22.5 18 25.5 14.5 25.5 L12.5 25.5 C10.5 25.5 9 24.6 7.8 23.2 L3.6 18.5 C2.8 17.6 3 16.3 4 15.8 C5 15.3 6 15.7 6.8 16.5 L8.2 18 Z" fill="#fff" stroke="#111" stroke-width="1.3" stroke-linejoin="round"/><path d="M11.8 9.8 L11.8 14.5 M14.8 10.4 L14.8 14.5 M17.7 11.2 L17.7 14.5" stroke="#111" stroke-width="1"/></svg>
</body></html>
